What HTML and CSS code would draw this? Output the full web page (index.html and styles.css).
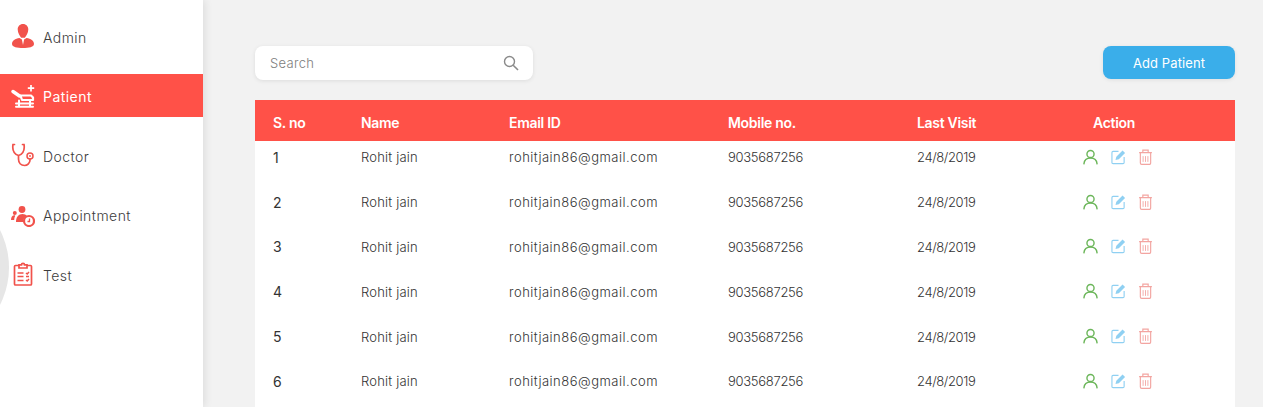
FILE: index.html
```html
<!DOCTYPE html>
<html lang="en">
<head>
<meta charset="utf-8">
<title>Patients</title>
<link rel="stylesheet" href="styles.css">
</head>
<body>
<svg class="defs" width="0" height="0" aria-hidden="true">
  <symbol id="i-user" viewBox="0 0 16 16"><circle cx="8" cy="4.800" r="3.800" fill="none" stroke="currentColor" stroke-width="1.500"/><path d="M1 15.300c.3-3.800 3-6.300 7-6.300s6.700 2.500 7 6.300" fill="none" stroke="currentColor" stroke-width="1.500" stroke-linecap="round"/></symbol>
  <symbol id="i-edit" viewBox="0 0 16 16"><path d="M8 2H2.200a1.200 1.200 0 0 0-1.200 1.200v10.600A1.200 1.200 0 0 0 2.200 15h10.600a1.200 1.200 0 0 0 1.200-1.200V8" fill="none" stroke="currentColor" stroke-width="1.200"/><path d="M4.800 11.200l.9-3.400L12.300 1l2.700 2.700-6.700 6.600z" fill="currentColor"/></symbol>
  <symbol id="i-trash" viewBox="0 0 16 18"><path d="M.8 4h14.400M5 3.800V1.200h6v2.600M2.200 4.500v11.300a1.500 1.500 0 0 0 1.500 1.500h8.600a1.500 1.500 0 0 0 1.500-1.500V4.500" fill="none" stroke="currentColor" stroke-width="1.300"/><path d="M5.300 8v6.500M8 8v6.500M10.700 8v6.500" fill="none" stroke="currentColor" stroke-width="1"/></symbol>
</svg>
<div class="app">
  <aside class="sidebar">
    <span class="blob"></span>
    <nav class="menu">
      <a class="item"><svg class="ico" viewBox="0 0 24 24"><path fill="currentColor" d="M12 0c3.200 0 5.300 2.400 5.300 5.500 0 3.300-2.200 6.800-3.500 8.300h-3.600C8.900 12.300 6.700 8.800 6.700 5.500 6.700 2.400 8.800 0 12 0zM8.500 14l2.400 1.500L12 21l1.100-5.500L15.500 14c4.300.5 7.500 2.900 7.500 6 0 3-5.200 4-11 4S1 23 1 20c0-3.100 3.200-5.500 7.500-6z"/></svg><span>Admin</span></a>
      <a class="item active"><svg class="ico" viewBox="0 0 24 24"><path fill="none" stroke="currentColor" stroke-width="3.400" stroke-linecap="round" d="M2 7.500l6.500 4.500"/><path fill="none" stroke="currentColor" stroke-width="2.200" stroke-linejoin="round" d="M9.500 11.500H20l2 2v2.500H11z"/><path fill="none" stroke="currentColor" stroke-width="2" stroke-linecap="round" d="M5 19.500h17M5 22.800h17M8 16.500v6M19 16.500v6"/><path fill="none" stroke="currentColor" stroke-width="1.700" d="M20 1v6.400M16.800 4.200h6.400"/></svg><span>Patient</span></a>
      <a class="item"><svg class="ico" viewBox="0 0 24 24"><path fill="none" stroke="currentColor" stroke-width="1.700" stroke-linecap="round" d="M3.500 1.500H2c-.8 5 1 9.500 5.500 11 4.500-1.500 6.300-6 5.500-11h-1.500M7.500 12.500v3.500c0 3.800 2.500 6.500 6 6.500 3 0 5.500-2.500 5.500-5.500v-1"/><circle cx="19" cy="13" r="3" fill="none" stroke="currentColor" stroke-width="1.500"/><circle cx="19" cy="13" r=".9" fill="currentColor"/></svg><span>Doctor</span></a>
      <a class="item"><svg class="ico" viewBox="0 0 24 24"><circle cx="11" cy="6.500" r="3.400" fill="currentColor"/><circle cx="3.800" cy="10" r="2" fill="currentColor"/><path fill="currentColor" d="M5 19c0-5 2.500-8 6.500-8 2 0 3.500.7 4.500 2-2.500 1-4 3.500-3.800 6zM0 17c0-2.400 1-4.800 3-4.800.5 0 1 .1 1.300.3C3.500 14 3.200 15.500 3.200 17z"/><circle cx="18" cy="18" r="5" fill="none" stroke="currentColor" stroke-width="2.200"/><path fill="none" stroke="currentColor" stroke-width="1.300" d="M18.500 15.500V18.500h-2"/></svg><span>Appointment</span></a>
      <a class="item"><svg class="ico" viewBox="0 0 24 24"><path fill="none" stroke="currentColor" stroke-width="1.700" d="M8 3.500H4.500a1 1 0 0 0-1 1V22a1 1 0 0 0 1 1h15a1 1 0 0 0 1-1V4.500a1 1 0 0 0-1-1H16M8 2.800h2.500a1.500 1.500 0 0 1 3 0H16V6H8z"/><path fill="none" stroke="currentColor" stroke-width="1.500" d="M6.500 11h6M6.500 14.500h6M6.500 18.500h6M15 11l1.200 1 1.800-2M15 18l1.200 1 1.800-2M15 14.500h3"/></svg><span>Test</span></a>
    </nav>
  </aside>
  <main class="main">
    <div class="toolbar">
      <div class="search"><span class="search-text">Search</span><svg class="search-ico" viewBox="0 0 16 16"><circle cx="6.500" cy="6.500" r="5" fill="none" stroke="currentColor" stroke-width="1.400"/><path d="M10.200 10.200 15 15" fill="none" stroke="currentColor" stroke-width="1.600"/></svg></div>
      <button class="add">Add Patient</button>
    </div>
    <div class="table">
      <div class="row head"><span>S. no</span><span>Name</span><span>Email ID</span><span>Mobile no.</span><span>Last Visit</span><span class="act">Action</span></div>
      <div class="row"><span class="num">1</span><span class="name">Rohit jain</span><span class="email">rohitjain86@gmail.com</span><span class="mob">9035687256</span><span class="date">24/8/2019</span><span class="act icons"><svg class="a green"><use href="#i-user"/></svg><svg class="a blue"><use href="#i-edit"/></svg><svg class="a pink"><use href="#i-trash"/></svg></span></div>
      <div class="row"><span class="num">2</span><span class="name">Rohit jain</span><span class="email">rohitjain86@gmail.com</span><span class="mob">9035687256</span><span class="date">24/8/2019</span><span class="act icons"><svg class="a green"><use href="#i-user"/></svg><svg class="a blue"><use href="#i-edit"/></svg><svg class="a pink"><use href="#i-trash"/></svg></span></div>
      <div class="row"><span class="num">3</span><span class="name">Rohit jain</span><span class="email">rohitjain86@gmail.com</span><span class="mob">9035687256</span><span class="date">24/8/2019</span><span class="act icons"><svg class="a green"><use href="#i-user"/></svg><svg class="a blue"><use href="#i-edit"/></svg><svg class="a pink"><use href="#i-trash"/></svg></span></div>
      <div class="row"><span class="num">4</span><span class="name">Rohit jain</span><span class="email">rohitjain86@gmail.com</span><span class="mob">9035687256</span><span class="date">24/8/2019</span><span class="act icons"><svg class="a green"><use href="#i-user"/></svg><svg class="a blue"><use href="#i-edit"/></svg><svg class="a pink"><use href="#i-trash"/></svg></span></div>
      <div class="row"><span class="num">5</span><span class="name">Rohit jain</span><span class="email">rohitjain86@gmail.com</span><span class="mob">9035687256</span><span class="date">24/8/2019</span><span class="act icons"><svg class="a green"><use href="#i-user"/></svg><svg class="a blue"><use href="#i-edit"/></svg><svg class="a pink"><use href="#i-trash"/></svg></span></div>
      <div class="row"><span class="num">6</span><span class="name">Rohit jain</span><span class="email">rohitjain86@gmail.com</span><span class="mob">9035687256</span><span class="date">24/8/2019</span><span class="act icons"><svg class="a green"><use href="#i-user"/></svg><svg class="a blue"><use href="#i-edit"/></svg><svg class="a pink"><use href="#i-trash"/></svg></span></div>
    </div>
  </main>
</div>
</body>
</html>
```
FILE: styles.css
```css
* { box-sizing: border-box; }
html, body { margin: 0; height: 100%; overflow: hidden; }
body { font-family: "Inter", "Liberation Sans", sans-serif; background: #f2f2f2; color: #444; }
.defs { position: absolute; }
.app { display: flex; height: 407px; }
.sidebar { position: relative; width: 203px; flex: none; background: #fff; box-shadow: 2px 0 8px rgba(0,0,0,.09); overflow: hidden; }
.blob { position: absolute; left: -156px; top: 185px; width: 165px; height: 165px; border-radius: 50%; background: #e6e6e6; }
.menu { position: relative; display: flex; flex-direction: column; gap: 16.500px; padding-top: 14.700px; }
.item { display: flex; align-items: center; gap: 8px; height: 43px; padding: 2px 0 0 11px; font-size: 14px; font-weight: 300; letter-spacing: .45px; color: #3c3c3c; }
.item.active { background: #ff5148; color: #fff; font-weight: 400; }
.ico { width: 24px; height: 24px; color: #f1524b; flex: none; margin-top: -2px; }
.item.active .ico { color: #fff; }
.main { flex: 1; padding: 46px 28px 0 52px; min-width: 0; }
.toolbar { display: flex; justify-content: space-between; align-items: flex-start; height: 54px; }
.search { display: flex; justify-content: space-between; align-items: center; width: 278px; height: 34px; padding: 0 14px 0 15px; background: #fff; border-radius: 8px; box-shadow: 0 1px 4px rgba(0,0,0,.09); }
.search-text { font-size: 13px; font-weight: 300; letter-spacing: .3px; color: #7d7d7d; }
.search-ico { width: 16px; height: 16px; color: #8a8a8a; }
.add { width: 132px; height: 33px; border: 0; border-radius: 8px; background: #3aaeea; color: #fff; font: 400 13px "Inter", "Liberation Sans", sans-serif; letter-spacing: .1px; box-shadow: 0 1px 4px rgba(0,0,0,.08); }
.table { background: #fff; height: 307px; }
.row { display: grid; grid-template-columns: 88px 148px 219px 189px 130px 134px; align-items: center; height: 44.800px; padding-left: 18px; font-size: 13px; font-weight: 300; letter-spacing: .3px; color: #333; }
.row:nth-child(2) { margin-top: -6px; }
.head { height: 41px; padding-top: 4px; background: #ff5148; color: #fff; font-size: 14px; font-weight: 600; letter-spacing: -.3px; }
.num { font-size: 14px; font-weight: 400; }
.name { letter-spacing: .2px; }
.email { letter-spacing: .5px; }
.mob { letter-spacing: -.3px; }
.date { letter-spacing: -.4px; }
.act { text-align: center; }
.icons { display: flex; justify-content: center; align-items: center; gap: 12.500px; padding-left: 8px; margin-top: -1px; }
.a { width: 15px; height: 16px; }
.green { color: #6cb65a; }
.blue { color: #8fd0f2; }
.pink { color: #f3a5a1; }
```
